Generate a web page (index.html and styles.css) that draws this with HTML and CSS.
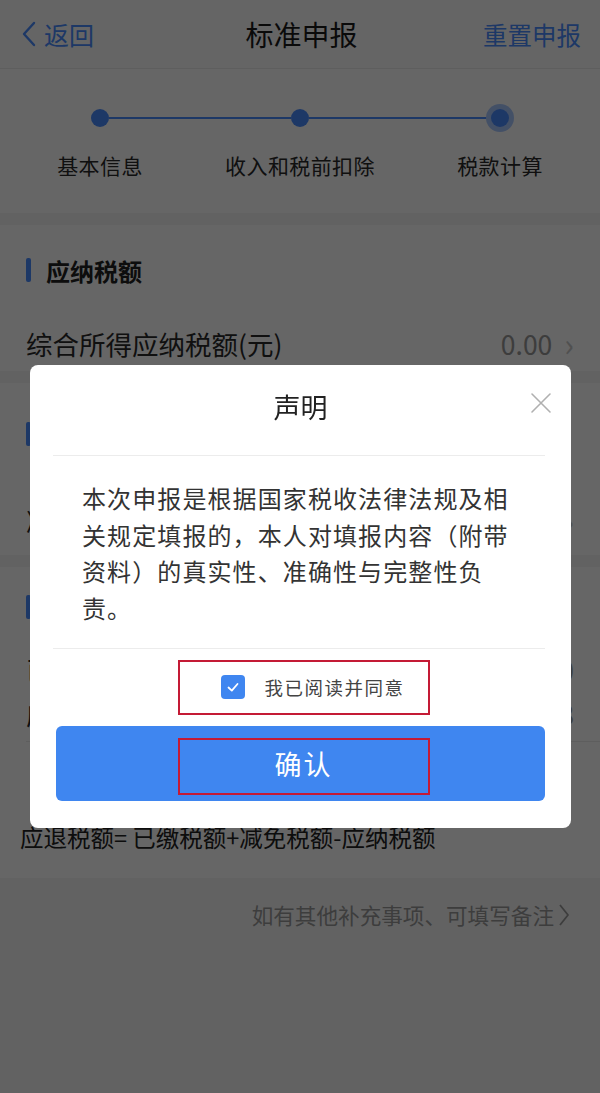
FILE: index.html
```html
<!DOCTYPE html>
<html lang="zh-CN">
<head>
<meta charset="utf-8">
<title>标准申报</title>
<link rel="stylesheet" href="styles.css">
</head>
<body>
<div class="page">
  <header class="nav">
    <div class="nav-back">
      <svg class="back-icon" viewBox="0 0 14 26" width="14" height="26"><path d="M12 2 L2 13 L12 24" fill="none" stroke="currentColor" stroke-width="2.4" stroke-linecap="round" stroke-linejoin="round"/></svg>
      <span>返回</span>
    </div>
    <div class="nav-title">标准申报</div>
    <div class="nav-action">重置申报</div>
  </header>

  <section class="steps">
    <div class="track">
      <span class="dot"></span><span class="line"></span><span class="dot"></span><span class="line"></span><span class="dot dot-active"></span>
    </div>
    <div class="labels">
      <span>基本信息</span><span>收入和税前扣除</span><span>税款计算</span>
    </div>
  </section>

  <section class="card card-a">
    <h2 class="sec-title">应纳税额</h2>
    <div class="row"><span class="row-label">综合所得应纳税额(元)</span><span class="row-value">0.00</span><span class="row-arrow">›</span></div>
  </section>

  <section class="card card-b">
    <h2 class="sec-title">减免税额</h2>
    <div class="row"><span class="row-label">减免税额(元)</span><span class="row-value">0.00</span><span class="row-arrow">›</span></div>
  </section>

  <section class="card card-c">
    <h2 class="sec-title">应补/退税额</h2>
    <div class="row row-small"><span class="row-label">已缴税额(元)</span><span class="row-value">0.00</span></div>
    <div class="row row-small"><span class="row-label">应补/退税额(元)</span><span class="row-value">8</span></div>
    <div class="rule"></div>
    <p class="formula">应退税额= 已缴税额+减免税额-应纳税额</p>
  </section>

  <div class="note">如有其他补充事项、可填写备注<svg class="note-arrow" viewBox="0 0 12 24" width="12" height="24"><path d="M2 2 L10 12 L2 22" fill="none" stroke="currentColor" stroke-width="1.8" stroke-linejoin="round"/></svg></div>
</div>

<div class="mask">
  <div class="dialog">
    <div class="dialog-head">
      <h3 class="dialog-title">声明</h3>
      <svg class="dialog-close" viewBox="0 0 22 22" width="22" height="22"><path d="M2 2 L20 20 M20 2 L2 20" stroke="currentColor" stroke-width="1.6" stroke-linecap="round"/></svg>
    </div>
    <div class="divider"></div>
    <p class="dialog-text">本次申报是根据国家税收法律法规及相关规定填报的，本人对填报内容（附带资料）的真实性、准确性与完整性负责。</p>
    <div class="divider"></div>
    <div class="agree-wrap">
      <label class="agree highlight">
        <span class="checkbox"><svg viewBox="0 0 24 24" width="24" height="24"><path d="M7.5 12.5 L10.8 15.6 L16.5 9" fill="none" stroke="#fff" stroke-width="1.8" stroke-linecap="round" stroke-linejoin="round"/></svg></span>
        <span class="agree-text">我已阅读并同意</span>
      </label>
    </div>
    <button class="confirm"><span class="confirm-inner highlight">确认</span></button>
  </div>
</div>
</body>
</html>
```

FILE: styles.css
```css
* { box-sizing: border-box; }
html, body { margin: 0; padding: 0; }
body {
  width: 600px;
  height: 1093px;
  overflow: hidden;
  background: #f5f5f5;
  font-family: "Noto Sans CJK SC", "Noto Sans", sans-serif;
  color: #333;
}
.page { background: #f5f5f5; min-height: 1093px; }

/* nav */
.nav {
  height: 69px;
  display: grid;
  grid-template-columns: 1fr auto 1fr;
  align-items: center;
  padding: 0 19px 0 22px;
  background: #fdfdfd;
  border-bottom: 1px solid #ececec;
}
.nav-back { display: flex; align-items: center; gap: 8px; color: #4a8cff; font-size: 25px; }
.back-icon { display: block; }
.nav-title { font-size: 28px; color: #1a1a1a; }
.nav-action { justify-self: end; color: #4a8cff; font-size: 24.5px; }

/* steps */
.steps { background: #fff; height: 144px; padding-top: 40px; }
.track { display: flex; align-items: center; padding: 0 91px; height: 18px; }
.dot { width: 18px; height: 18px; border-radius: 50%; background: #4a8cff; flex: none; }
.dot-active { box-shadow: 0 0 0 5px #a9c8ff; }
.line { flex: 1; height: 2px; background: #4a8cff; }
.labels { display: grid; grid-template-columns: repeat(3, 1fr); margin-top: 23px; text-align: center; font-size: 21px; color: #2a2a2a; letter-spacing: 0.4px; }

/* cards */
.card { background: #fff; margin-top: 12px; }
.sec-title {
  margin: 0;
  height: 90px;
  display: flex;
  align-items: center;
  padding-left: 46px;
  position: relative;
  font-size: 24px;
  font-weight: 700;
  color: #222;
}
.sec-title::before {
  content: "";
  position: absolute;
  left: 26px;
  top: 33px;
  width: 5px;
  height: 24px;
  border-radius: 2px;
  background: #4a8cff;
}
.row {
  height: 60px;
  display: flex;
  align-items: center;
  padding: 0 26px;
  font-size: 26.5px;
}
.row-label { flex: 1; color: #2a2a2a; }
.row-value { color: #999; }
.row-arrow { color: #c8c8c8; font-size: 32px; margin-left: 12px; line-height: 1; }
.card-a .row { height: 56px; }
.card-b .sec-title { height: 102px; }
.card-b .sec-title::before { top: 39px; }
.card-b .row { height: 70px; }
.card-c .sec-title { height: 80px; }
.card-c .sec-title::before { top: 28px; }
.row-small { height: 44px; }
.rule { height: 1px; background: #ececec; margin: 6px 0 0 26px; }
.formula { margin: 0; padding: 79px 0 25px 20px; font-size: 23.5px; line-height: 32px; color: #222; }

.note {
  display: flex;
  justify-content: flex-end;
  align-items: center;
  gap: 4px;
  padding: 21px 30px 0 0;
  font-size: 21.6px;
  color: #999;
}
.note-arrow { display: block; }

/* mask & dialog */
.mask {
  position: fixed;
  inset: 0;
  background: rgba(0, 0, 0, 0.6);
  padding: 365px 29px 0 30px;
}
.dialog {
  background: #fff;
  border-radius: 8px;
  padding-bottom: 27px;
}
.dialog-head { height: 90px; display: flex; align-items: center; justify-content: center; position: relative; }
.dialog-title { margin: 0 0 6px; font-size: 27px; line-height: 1.2; font-weight: 400; color: #222; }
.dialog-close { position: absolute; right: 19px; top: 27px; color: #b0b0b0; }
.divider { height: 1px; background: #ececec; margin: 0 26px 0 23px; }
.dialog-text {
  margin: 0;
  padding: 24px 49px 21px 52px;
  font-size: 24px;
  line-height: 36.7px;
  letter-spacing: 1.1px;
  color: #333;
}
.agree-wrap { display: flex; justify-content: center; padding: 11px 0 0 6px; }
.highlight { border: 2px solid #c41a35; }
.agree {
  width: 252px;
  height: 55px;
  display: flex;
  align-items: center;
  padding-left: 41px;
  gap: 20px;
}
.checkbox { width: 24px; height: 24px; border-radius: 4px; background: #3f86f0; display: block; }
.checkbox svg { display: block; }
.agree-text { font-size: 18.5px; color: #444; letter-spacing: 1.5px; }
.confirm {
  display: flex;
  justify-content: center;
  align-items: flex-start;
  width: 489px;
  height: 75px;
  margin: 11px 0 0 26px;
  padding: 12px 0 0 6px;
  border: none;
  border-radius: 6px;
  background: #3f86f0;
  font-family: inherit;
  cursor: pointer;
}
.confirm-inner {
  width: 252px;
  height: 57px;
  display: flex;
  align-items: center;
  justify-content: center;
  color: #fff;
  font-size: 27px;
  line-height: 1;
  padding-bottom: 6px;
  letter-spacing: 2px;
}
```
